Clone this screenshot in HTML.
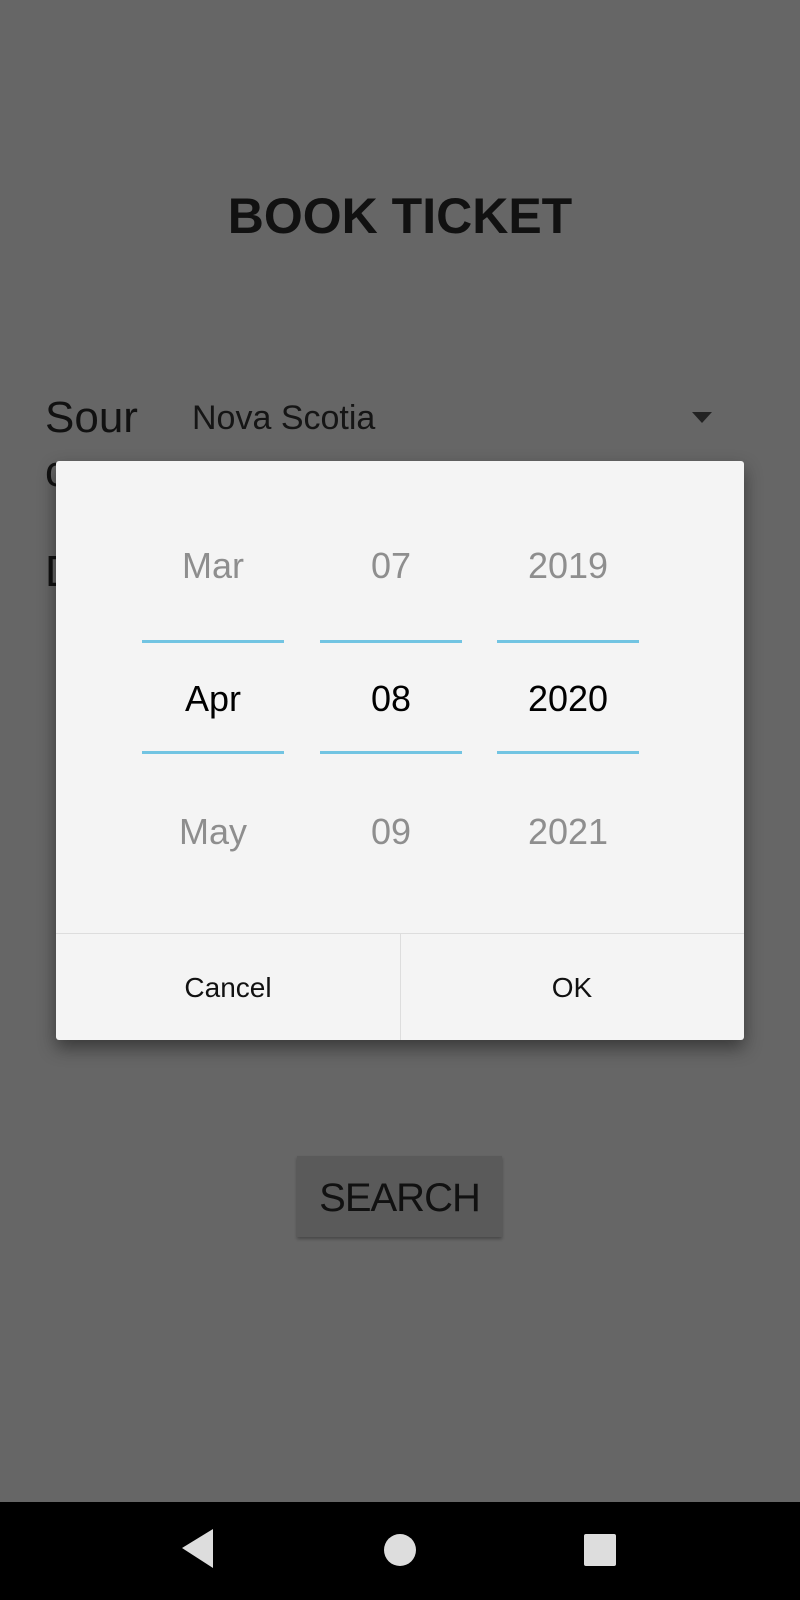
<!DOCTYPE html>
<html><head><style>
body{margin:0;width:800px;height:1600px;background:#666;position:relative;overflow:hidden;font-family:"Liberation Sans",sans-serif}
.a{position:absolute}
.t{position:absolute;white-space:nowrap;line-height:1}
.dlg{left:56px;top:461px;width:688px;height:579px;background:#f4f4f4;border-radius:3px;box-shadow:0 8px 18px rgba(0,0,0,.45)}
.col{position:absolute;width:142px;text-align:center;font-size:36px;line-height:1}
.line{position:absolute;width:142px;height:3px;background:#72c4e2}
</style></head><body>
<div class="t" style="left:0;width:800px;text-align:center;top:191px;font-size:50px;font-weight:bold;color:#111">BOOK TICKET</div>
<div class="t" style="left:45px;top:396px;font-size:44px;color:#111">Sour</div>
<div class="t" style="left:45px;top:450px;font-size:44px;color:#111">ce</div>
<div class="t" style="left:45px;top:550px;font-size:44px;color:#111">D</div>
<div class="t" style="left:192px;top:401px;font-size:34px;color:#151515">Nova Scotia</div>
<svg class="a" style="left:690px;top:411px" width="24" height="13"><polygon points="2,1 22,1 12,12" fill="#222"/></svg>
<div class="a" style="left:297px;top:1156px;width:205px;height:81px;background:#5a5a5a;box-shadow:0 2px 3px rgba(0,0,0,.3)"></div>
<div class="t" style="left:297px;width:205px;text-align:center;top:1178px;font-size:40px;color:#111;letter-spacing:-1px">SEARCH</div>

<div class="a dlg">
<div class="col" style="left:86px;top:87px;color:#8e8e8e">Mar</div>
<div class="col" style="left:264px;top:87px;color:#8e8e8e">07</div>
<div class="col" style="left:441px;top:87px;color:#8e8e8e">2019</div>
<div class="line" style="left:86px;top:179px"></div>
<div class="line" style="left:264px;top:179px"></div>
<div class="line" style="left:441px;top:179px"></div>
<div class="col" style="left:86px;top:220px;color:#000">Apr</div>
<div class="col" style="left:264px;top:220px;color:#000">08</div>
<div class="col" style="left:441px;top:220px;color:#000">2020</div>
<div class="line" style="left:86px;top:290px"></div>
<div class="line" style="left:264px;top:290px"></div>
<div class="line" style="left:441px;top:290px"></div>
<div class="col" style="left:86px;top:353px;color:#8e8e8e">May</div>
<div class="col" style="left:264px;top:353px;color:#8e8e8e">09</div>
<div class="col" style="left:441px;top:353px;color:#8e8e8e">2021</div>
<div class="a" style="left:0;top:472px;width:688px;height:1px;background:#ddd"></div>
<div class="a" style="left:344px;top:472px;width:1px;height:107px;background:#ddd"></div>
<div class="t" style="left:0;width:344px;text-align:center;top:513px;font-size:28px;color:#111">Cancel</div>
<div class="t" style="left:344px;width:344px;text-align:center;top:513px;font-size:28px;color:#111">OK</div>
</div>

<div class="a" style="left:0;top:1502px;width:800px;height:98px;background:#000"></div>
<svg class="a" style="left:0;top:1502px" width="800" height="98">
<polygon points="213,27 213,66 182,46" fill="#ddd"/>
<circle cx="400" cy="48" r="16" fill="#ddd"/>
<rect x="584" y="32" width="32" height="32" rx="2" fill="#ddd"/>
</svg>
</body></html>
